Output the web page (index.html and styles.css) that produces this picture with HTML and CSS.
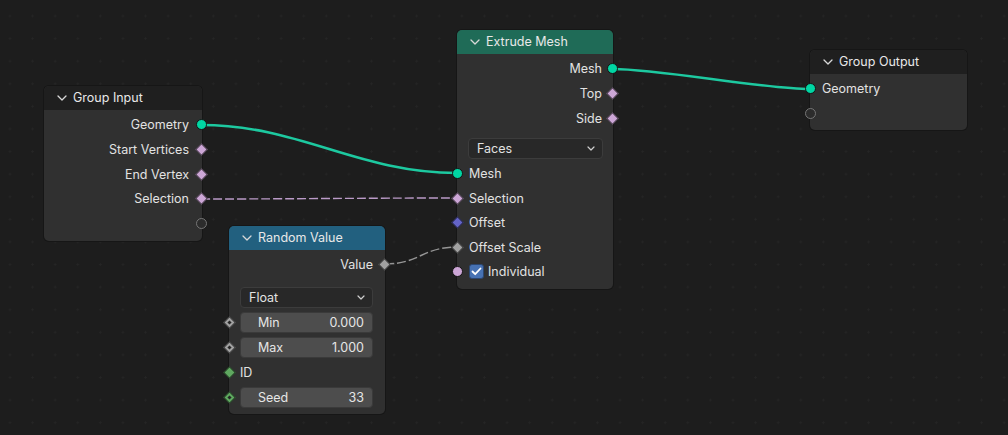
FILE: index.html
```html
<!DOCTYPE html>
<html>
<head>
<meta charset="utf-8">
<link rel="stylesheet" href="styles.css">
</head>
<body>
<div class="canvas">
  <svg class="links" width="1008" height="435" viewBox="0 0 1008 435">
    <path class="link geo" d="M201,125 C300,125 358,173 457,173"/>
    <path class="link geo" d="M613,69 C660,69 763,89 810,89"/>
    <path class="link sel" d="M201,199 C300,199 358,198 457,198"/>
    <path class="link val" d="M385,264 C420,264 422,247 457,247"/>
  </svg>

  <div class="node n-group-input">
    <div class="header plain"><span class="chev"><svg width="10" height="6" viewBox="0 0 10 6"><polyline points="1,1 5,5 9,1"/></svg></span>Group Input</div>
    <div class="body">
      <div class="row out">Geometry<span class="sock circle geo-c"></span></div>
      <div class="row out">Start Vertices<span class="sock diamond lav"></span></div>
      <div class="row out">End Vertex<span class="sock diamond lav"></span></div>
      <div class="row out">Selection<span class="sock diamond lav"></span></div>
      <div class="row out"><span class="sock circle empty"></span></div>
    </div>
  </div>

  <div class="node n-extrude">
    <div class="header green"><span class="chev"><svg width="10" height="6" viewBox="0 0 10 6"><polyline points="1,1 5,5 9,1"/></svg></span>Extrude Mesh</div>
    <div class="body">
      <div class="row out">Mesh<span class="sock circle geo-c"></span></div>
      <div class="row out">Top<span class="sock diamond lav"></span></div>
      <div class="row out">Side<span class="sock diamond lav"></span></div>
      <div class="frow first"><div class="select">Faces<svg class="dd" width="8" height="5" viewBox="0 0 8 5"><polyline points="1,1 4,4 7,1"/></svg></div></div>
      <div class="row in"><span class="sock circle geo-c"></span>Mesh</div>
      <div class="row in"><span class="sock diamond lav"></span>Selection</div>
      <div class="row in"><span class="sock diamond blue"></span>Offset</div>
      <div class="row in"><span class="sock diamond gray"></span>Offset Scale</div>
      <div class="row in"><span class="sock circle lav"></span><span class="check"><svg width="11" height="9" viewBox="0 0 11 9"><polyline points="1.5,4.5 4.2,7.2 9.5,1.5"/></svg></span>Individual</div>
    </div>
  </div>

  <div class="node n-group-output">
    <div class="header plain"><span class="chev"><svg width="10" height="6" viewBox="0 0 10 6"><polyline points="1,1 5,5 9,1"/></svg></span>Group Output</div>
    <div class="body">
      <div class="row in"><span class="sock circle geo-c"></span>Geometry</div>
      <div class="row in"><span class="sock circle empty"></span></div>
    </div>
  </div>

  <div class="node n-random">
    <div class="header blueh"><span class="chev"><svg width="10" height="6" viewBox="0 0 10 6"><polyline points="1,1 5,5 9,1"/></svg></span>Random Value</div>
    <div class="body">
      <div class="row out">Value<span class="sock diamond gray"></span></div>
      <div class="frow first2"><div class="select">Float<svg class="dd" width="8" height="5" viewBox="0 0 8 5"><polyline points="1,1 4,4 7,1"/></svg></div></div>
      <div class="frow"><span class="sock diamond gray hollow"></span><div class="num"><span>Min</span><span>0.000</span></div></div>
      <div class="frow"><span class="sock diamond gray hollow"></span><div class="num"><span>Max</span><span>1.000</span></div></div>
      <div class="frow lbl"><span class="sock diamond green"></span>ID</div>
      <div class="frow"><span class="sock diamond green hollow"></span><div class="num"><span>Seed</span><span>33</span></div></div>
    </div>
  </div>
</div>
</body>
</html>
```

FILE: styles.css
```css
html, body {
  margin: 0;
  padding: 0;
}
body {
  background: #1d1d1d;
  font-family: Inter, "Noto Sans", "DejaVu Sans", sans-serif;
  font-size: 12.5px;
  color: #e2e2e2;
}
.canvas {
  position: relative;
  width: 1008px;
  height: 435px;
  overflow: hidden;
  background-color: #1d1d1d;
  background-image: radial-gradient(circle, #252525 0.9px, rgba(0,0,0,0) 1.4px);
  background-size: 22.6px 22.6px;
  background-position: -1.3px 4.7px;
}
.links {
  position: absolute;
  left: 0;
  top: 0;
}
.link {
  fill: none;
}
.link.geo {
  stroke: #1dc9a0;
  stroke-width: 2.6;
}
.link.sel {
  stroke: #bb9bc8;
  stroke-width: 1.4;
  stroke-dasharray: 9 3;
}
.link.val {
  stroke: #959595;
  stroke-width: 1.4;
  stroke-dasharray: 9 3;
}

.node {
  position: absolute;
  border-radius: 5px;
  background: #303030;
  box-shadow: 0 0 0 1px #161616;
}
.n-group-input { left: 44px; top: 86px; width: 158px; }
.n-extrude { left: 457px; top: 30px; width: 156px; }
.n-group-output { left: 810px; top: 50px; width: 157px; }
.n-random { left: 229px; top: 226px; width: 156px; }

.header {
  height: 24px;
  display: flex;
  align-items: center;
  padding-left: 13px;
  border-radius: 5px 5px 0 0;
  color: #e8e8e8;
  box-sizing: border-box;
  padding-bottom: 1px;
}
.header.plain { background: #1f1f1f; }
.header.green { background: #1f6b57; }
.header.blueh { background: #22607f; }
.chev {
  display: flex;
  width: 10px;
  margin-right: 6px;
  margin-top: 1px;
}
.chev polyline {
  fill: none;
  stroke: #d8d8d8;
  stroke-width: 1.3;
  stroke-linecap: round;
  stroke-linejoin: round;
}

.body {
  padding: 2.7px 0 5px 0;
}
.n-group-input .body { padding-bottom: 5.5px; }
.n-group-output .body { padding-bottom: 4px; }
.n-random .body { padding-bottom: 4px; }

.row {
  position: relative;
  height: 24.6px;
  display: flex;
  align-items: center;
  box-sizing: border-box;
}
.row.out {
  justify-content: flex-end;
  padding-right: 13px;
}
.n-extrude .row.out { padding-right: 11px; }
.n-random .row.out { padding-right: 12px; }
.row.in {
  padding-left: 12px;
}

.frow {
  position: relative;
  height: 25px;
  display: flex;
  align-items: center;
  padding: 0 11px 0 11px;
}
.n-random .frow { padding-right: 12px; }
.n-extrude .frow { padding-right: 10px; }
.frow.first { margin-top: 5.7px; }
.frow.first2 { margin-top: 8px; }
.frow.lbl { padding-left: 11px; }

.select {
  flex: 1;
  height: 21px;
  box-sizing: border-box;
  background: #282828;
  border: 1px solid #3c3c3c;
  border-radius: 4px;
  display: flex;
  align-items: center;
  justify-content: space-between;
  padding: 0 7px 0 8px;
  color: #e2e2e2;
}
.dd polyline {
  fill: none;
  stroke: #cfcfcf;
  stroke-width: 1.2;
  stroke-linecap: round;
  stroke-linejoin: round;
}
.num {
  flex: 1;
  height: 21px;
  box-sizing: border-box;
  background: #4d4d4d;
  border: 1px solid #3a3a3a;
  border-radius: 4px;
  display: flex;
  align-items: center;
  justify-content: space-between;
  padding: 0 8px 0 17px;
  color: #e6e6e6;
}

.check {
  width: 15px;
  height: 15px;
  box-sizing: border-box;
  background: #4772b3;
  border: 1px solid #2b4670;
  border-radius: 3px;
  display: flex;
  align-items: center;
  justify-content: center;
  margin-right: 4px;
}
.check polyline {
  fill: none;
  stroke: #ffffff;
  stroke-width: 1.8;
  stroke-linecap: round;
  stroke-linejoin: round;
}

.sock {
  position: absolute;
  top: 50%;
  box-sizing: border-box;
}
.sock.circle {
  width: 11px;
  height: 11px;
  margin-top: -5.5px;
  border-radius: 50%;
  border: 1px solid #141414;
}
.row.out .sock.circle { right: -4.5px; }
.row.in .sock.circle { left: -5.5px; }
.sock.diamond {
  width: 9px;
  height: 9px;
  margin-top: -4.5px;
  transform: rotate(45deg);
  border: 1px solid rgba(10,10,10,0.7);
}
.row.out .sock.diamond { right: -3.5px; }
.row.in .sock.diamond, .frow .sock.diamond { left: -4.5px; }
.geo-c { background: #00d6a3; }
.lav { background: #cca6d6; }
.blue { background: #6363c7; }
.gray { background: #a1a1a1; }
.green { background: #5fa860; }
.sock.empty {
  background: #2c2c2c;
  border: 1.6px solid #767676;
}
.sock.hollow::after {
  content: "";
  position: absolute;
  left: 2px;
  top: 2px;
  width: 3px;
  height: 3px;
  background: #262626;
}
```
